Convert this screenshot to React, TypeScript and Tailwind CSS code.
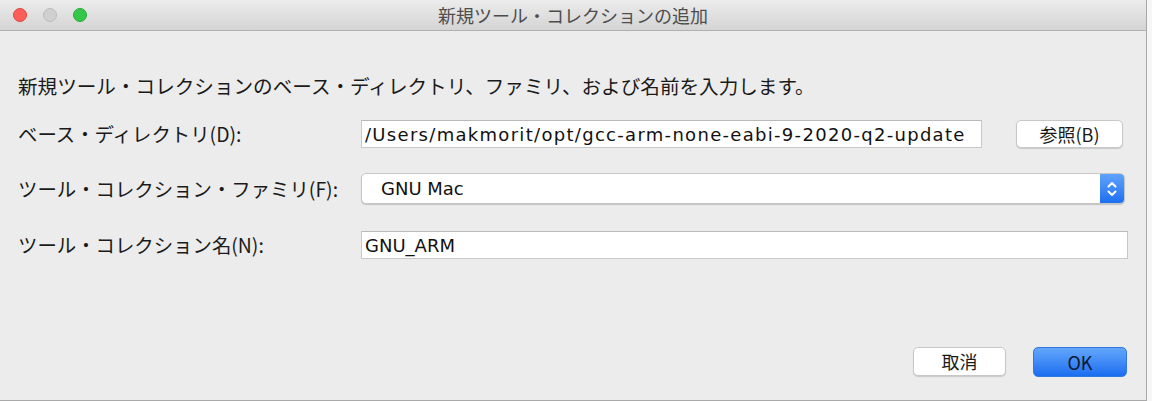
import React from 'react';

const jp = "font-['Noto_Sans_CJK_JP','Noto_Sans',sans-serif]";
const field = "font-['DejaVu_Sans','Noto_Sans_CJK_JP',sans-serif]";

function TrafficLights() {
  return (
    <div className="flex items-center gap-[16px] pl-[13px]">
      <span className="w-[14px] h-[14px] rounded-full bg-[#fc5f57] border border-[#e0443e]" />
      <span className="w-[14px] h-[14px] rounded-full bg-[#d0d0d0] border border-[#bdbdbd]" />
      <span className="w-[14px] h-[14px] rounded-full bg-[#34c84a] border border-[#27aa36]" />
    </div>
  );
}

function TextField({ value, width, wide }: { value: string; width: string; wide?: boolean }) {
  return (
    <div
      className={`${width} h-[28px] flex items-center bg-white border border-[#c9c9c9] border-t-[#b9b9b9] pl-[3px] text-[18px] text-[#111] whitespace-nowrap overflow-hidden ${field} ${wide ? 'tracking-[1.3px]' : ''}`}
    >
      {value}
    </div>
  );
}

export default function App() {
  return (
    <div className={`w-[1152px] h-[401px] bg-[#f6f6f6] ${jp}`}>
      <div className="w-[1147px] h-[401px] flex flex-col bg-[#ececec] border-r border-b border-[#a9a9a9]">
        {/* Title bar */}
        <div className="relative h-[31px] shrink-0 flex items-center bg-gradient-to-b from-[#ececec] to-[#d4d4d4] border-b border-[#b1b1b1]">
          <TrafficLights />
          <div className="absolute inset-0 flex items-center justify-center text-[18px] text-[#4d4d4d]">
            新規ツール・コレクションの追加
          </div>
        </div>

        <div className="flex flex-col flex-1 pl-[18px]">
          <p className="mt-[45px] h-[20px] leading-[20px] text-[19.6px] text-[#1a1a1a] whitespace-nowrap">
            新規ツール・コレクションのベース・ディレクトリ、ファミリ、および名前を入力します。
          </p>

          {/* Base directory */}
          <div className="mt-[24px] h-[28px] flex items-center">
            <label className="w-[343px] text-[19.4px] text-[#1a1a1a]">ベース・ディレクトリ(D):</label>
            <TextField value="/Users/makmorit/opt/gcc-arm-none-eabi-9-2020-q2-update" width="w-[621px]" wide />
            <button className="ml-[34px] w-[107px] h-[28px] rounded-[5px] bg-white border border-[#c8c8c8] shadow-[0_1px_1px_rgba(0,0,0,0.15)] text-[18px] text-[#1a1a1a]">
              参照(B)
            </button>
          </div>

          {/* Family */}
          <div className="mt-[25px] h-[31px] flex items-center">
            <label className="w-[343px] text-[19.4px] text-[#1a1a1a] whitespace-nowrap">ツール・コレクション・ファミリ(F):</label>
            <div className="w-[764px] h-[31px] flex items-stretch rounded-[5px] bg-white border border-[#c6c6c6] shadow-[0_1px_1px_rgba(0,0,0,0.18)] overflow-hidden">
              <div className={`flex-1 flex items-center pl-[19px] text-[18px] text-[#111] ${field}`}>GNU Mac</div>
              <div className="w-[24px] flex items-center justify-center bg-gradient-to-b from-[#5ea2fa] to-[#1c6ff2]">
                <svg width="12" height="20" viewBox="0 0 12 20" fill="none" stroke="white" strokeWidth="2" strokeLinecap="round" strokeLinejoin="round">
                  <path d="M2.5 7.5 6 4l3.5 3.5" />
                  <path d="M2.5 12.5 6 16l3.5-3.5" />
                </svg>
              </div>
            </div>
          </div>

          {/* Name */}
          <div className="mt-[27px] h-[28px] flex items-center">
            <label className="w-[343px] text-[19.4px] text-[#1a1a1a]">ツール・コレクション名(N):</label>
            <TextField value="GNU_ARM" width="w-[767px]" />
          </div>

          {/* Footer */}
          <div className="mt-auto mb-[23px] flex justify-end pr-[19px] gap-[27px]">
            <button className="w-[93px] h-[29px] rounded-[5px] bg-white border border-[#c8c8c8] shadow-[0_1px_1px_rgba(0,0,0,0.15)] text-[18px] text-[#1a1a1a]">
              取消
            </button>
            <button className="w-[94px] h-[30px] rounded-[5px] bg-gradient-to-b from-[#63a6fb] to-[#1a6df0] border border-[#2f78e6] text-[18px] text-[#0b1630]">
              OK
            </button>
          </div>
        </div>
      </div>
    </div>
  );
}
